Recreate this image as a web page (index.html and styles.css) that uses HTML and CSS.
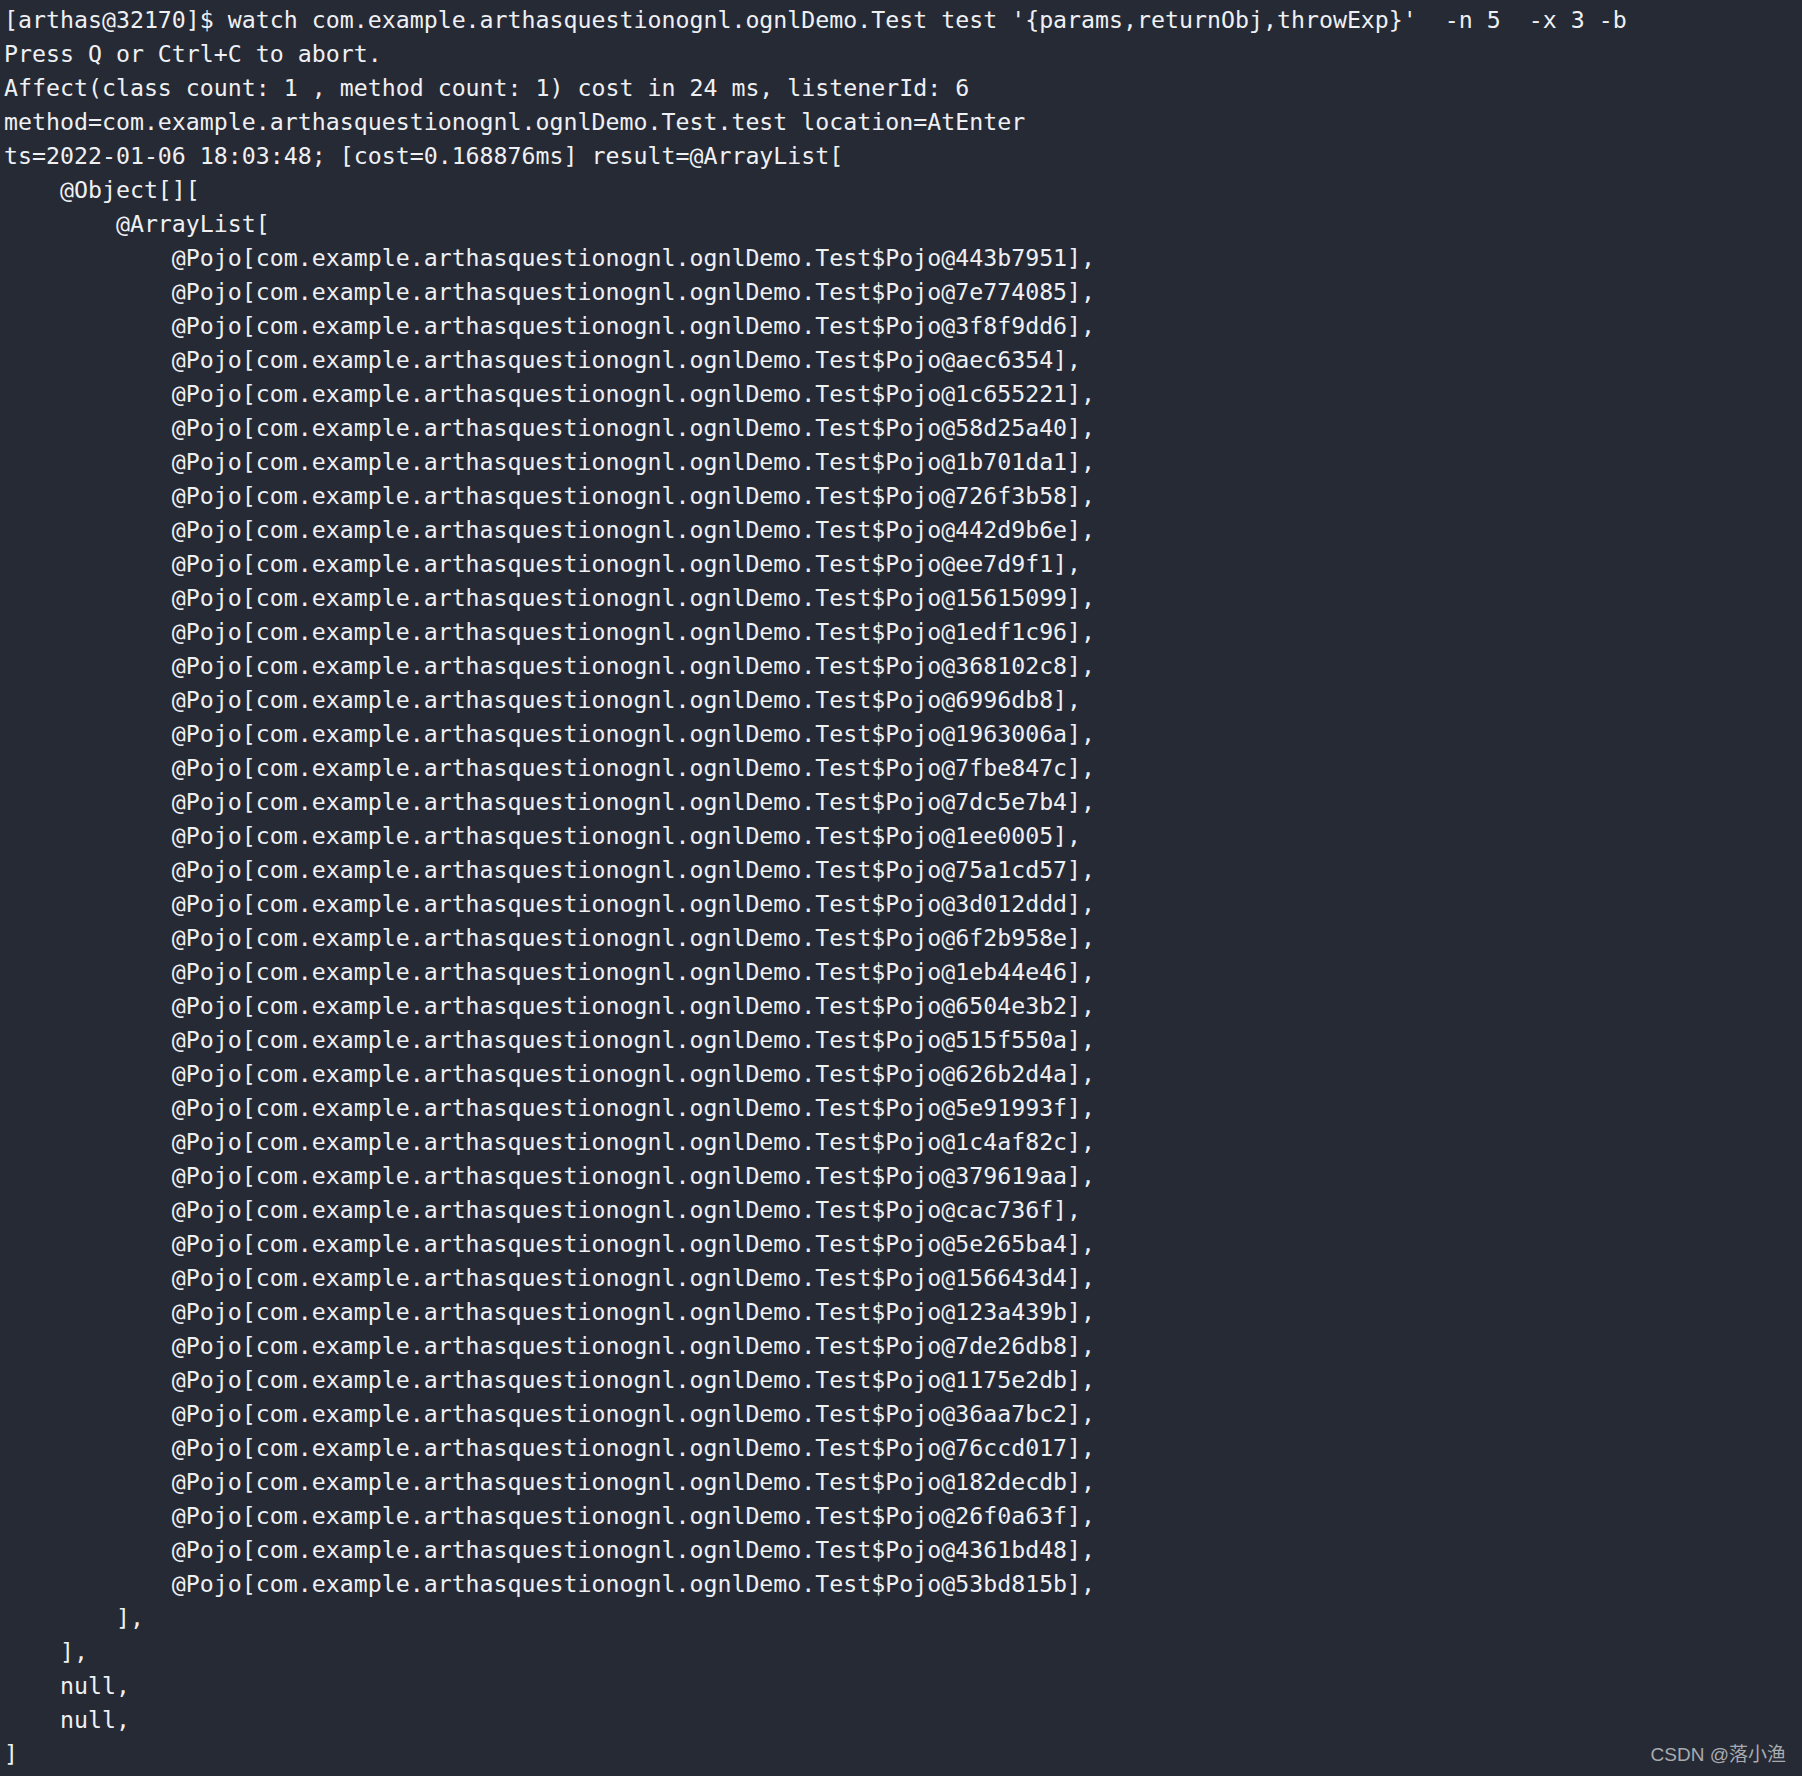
FILE: index.html
```html
<!DOCTYPE html>
<html>
<head>
<meta charset="utf-8">
<link rel="stylesheet" href="styles.css">
</head>
<body>
<div class="term">
<pre class="out">[arthas@32170]$ watch com.example.arthasquestionognl.ognlDemo.Test test '{params,returnObj,throwExp}'  -n 5  -x 3 -b
Press Q or Ctrl+C to abort.
Affect(class count: 1 , method count: 1) cost in 24 ms, listenerId: 6
method=com.example.arthasquestionognl.ognlDemo.Test.test location=AtEnter
ts=2022-01-06 18:03:48; [cost=0.168876ms] result=@ArrayList[
    @Object[][
        @ArrayList[
            @Pojo[com.example.arthasquestionognl.ognlDemo.Test$Pojo@443b7951],
            @Pojo[com.example.arthasquestionognl.ognlDemo.Test$Pojo@7e774085],
            @Pojo[com.example.arthasquestionognl.ognlDemo.Test$Pojo@3f8f9dd6],
            @Pojo[com.example.arthasquestionognl.ognlDemo.Test$Pojo@aec6354],
            @Pojo[com.example.arthasquestionognl.ognlDemo.Test$Pojo@1c655221],
            @Pojo[com.example.arthasquestionognl.ognlDemo.Test$Pojo@58d25a40],
            @Pojo[com.example.arthasquestionognl.ognlDemo.Test$Pojo@1b701da1],
            @Pojo[com.example.arthasquestionognl.ognlDemo.Test$Pojo@726f3b58],
            @Pojo[com.example.arthasquestionognl.ognlDemo.Test$Pojo@442d9b6e],
            @Pojo[com.example.arthasquestionognl.ognlDemo.Test$Pojo@ee7d9f1],
            @Pojo[com.example.arthasquestionognl.ognlDemo.Test$Pojo@15615099],
            @Pojo[com.example.arthasquestionognl.ognlDemo.Test$Pojo@1edf1c96],
            @Pojo[com.example.arthasquestionognl.ognlDemo.Test$Pojo@368102c8],
            @Pojo[com.example.arthasquestionognl.ognlDemo.Test$Pojo@6996db8],
            @Pojo[com.example.arthasquestionognl.ognlDemo.Test$Pojo@1963006a],
            @Pojo[com.example.arthasquestionognl.ognlDemo.Test$Pojo@7fbe847c],
            @Pojo[com.example.arthasquestionognl.ognlDemo.Test$Pojo@7dc5e7b4],
            @Pojo[com.example.arthasquestionognl.ognlDemo.Test$Pojo@1ee0005],
            @Pojo[com.example.arthasquestionognl.ognlDemo.Test$Pojo@75a1cd57],
            @Pojo[com.example.arthasquestionognl.ognlDemo.Test$Pojo@3d012ddd],
            @Pojo[com.example.arthasquestionognl.ognlDemo.Test$Pojo@6f2b958e],
            @Pojo[com.example.arthasquestionognl.ognlDemo.Test$Pojo@1eb44e46],
            @Pojo[com.example.arthasquestionognl.ognlDemo.Test$Pojo@6504e3b2],
            @Pojo[com.example.arthasquestionognl.ognlDemo.Test$Pojo@515f550a],
            @Pojo[com.example.arthasquestionognl.ognlDemo.Test$Pojo@626b2d4a],
            @Pojo[com.example.arthasquestionognl.ognlDemo.Test$Pojo@5e91993f],
            @Pojo[com.example.arthasquestionognl.ognlDemo.Test$Pojo@1c4af82c],
            @Pojo[com.example.arthasquestionognl.ognlDemo.Test$Pojo@379619aa],
            @Pojo[com.example.arthasquestionognl.ognlDemo.Test$Pojo@cac736f],
            @Pojo[com.example.arthasquestionognl.ognlDemo.Test$Pojo@5e265ba4],
            @Pojo[com.example.arthasquestionognl.ognlDemo.Test$Pojo@156643d4],
            @Pojo[com.example.arthasquestionognl.ognlDemo.Test$Pojo@123a439b],
            @Pojo[com.example.arthasquestionognl.ognlDemo.Test$Pojo@7de26db8],
            @Pojo[com.example.arthasquestionognl.ognlDemo.Test$Pojo@1175e2db],
            @Pojo[com.example.arthasquestionognl.ognlDemo.Test$Pojo@36aa7bc2],
            @Pojo[com.example.arthasquestionognl.ognlDemo.Test$Pojo@76ccd017],
            @Pojo[com.example.arthasquestionognl.ognlDemo.Test$Pojo@182decdb],
            @Pojo[com.example.arthasquestionognl.ognlDemo.Test$Pojo@26f0a63f],
            @Pojo[com.example.arthasquestionognl.ognlDemo.Test$Pojo@4361bd48],
            @Pojo[com.example.arthasquestionognl.ognlDemo.Test$Pojo@53bd815b],
        ],
    ],
    null,
    null,
]</pre>
<div class="watermark">CSDN @落小渔</div>
</div>
</body>
</html>
```

FILE: styles.css
```css
html, body {
  margin: 0;
  padding: 0;
  background: #262a35;
}
.term {
  position: relative;
  width: 1802px;
  height: 1776px;
  background: #262a35;
  box-sizing: border-box;
  padding: 3px 0 0 4px;
  overflow: hidden;
}
.out {
  margin: 0;
  font-family: "DejaVu Sans Mono", "Liberation Mono", monospace;
  font-size: 23.24px;
  line-height: 34px;
  color: #eef0f3;
  white-space: pre;
}
.watermark {
  position: absolute;
  right: 16px;
  bottom: 10px;
  font-family: "Liberation Sans", "Noto Sans CJK SC", sans-serif;
  font-size: 19px;
  color: #a9abb0;
}
```
